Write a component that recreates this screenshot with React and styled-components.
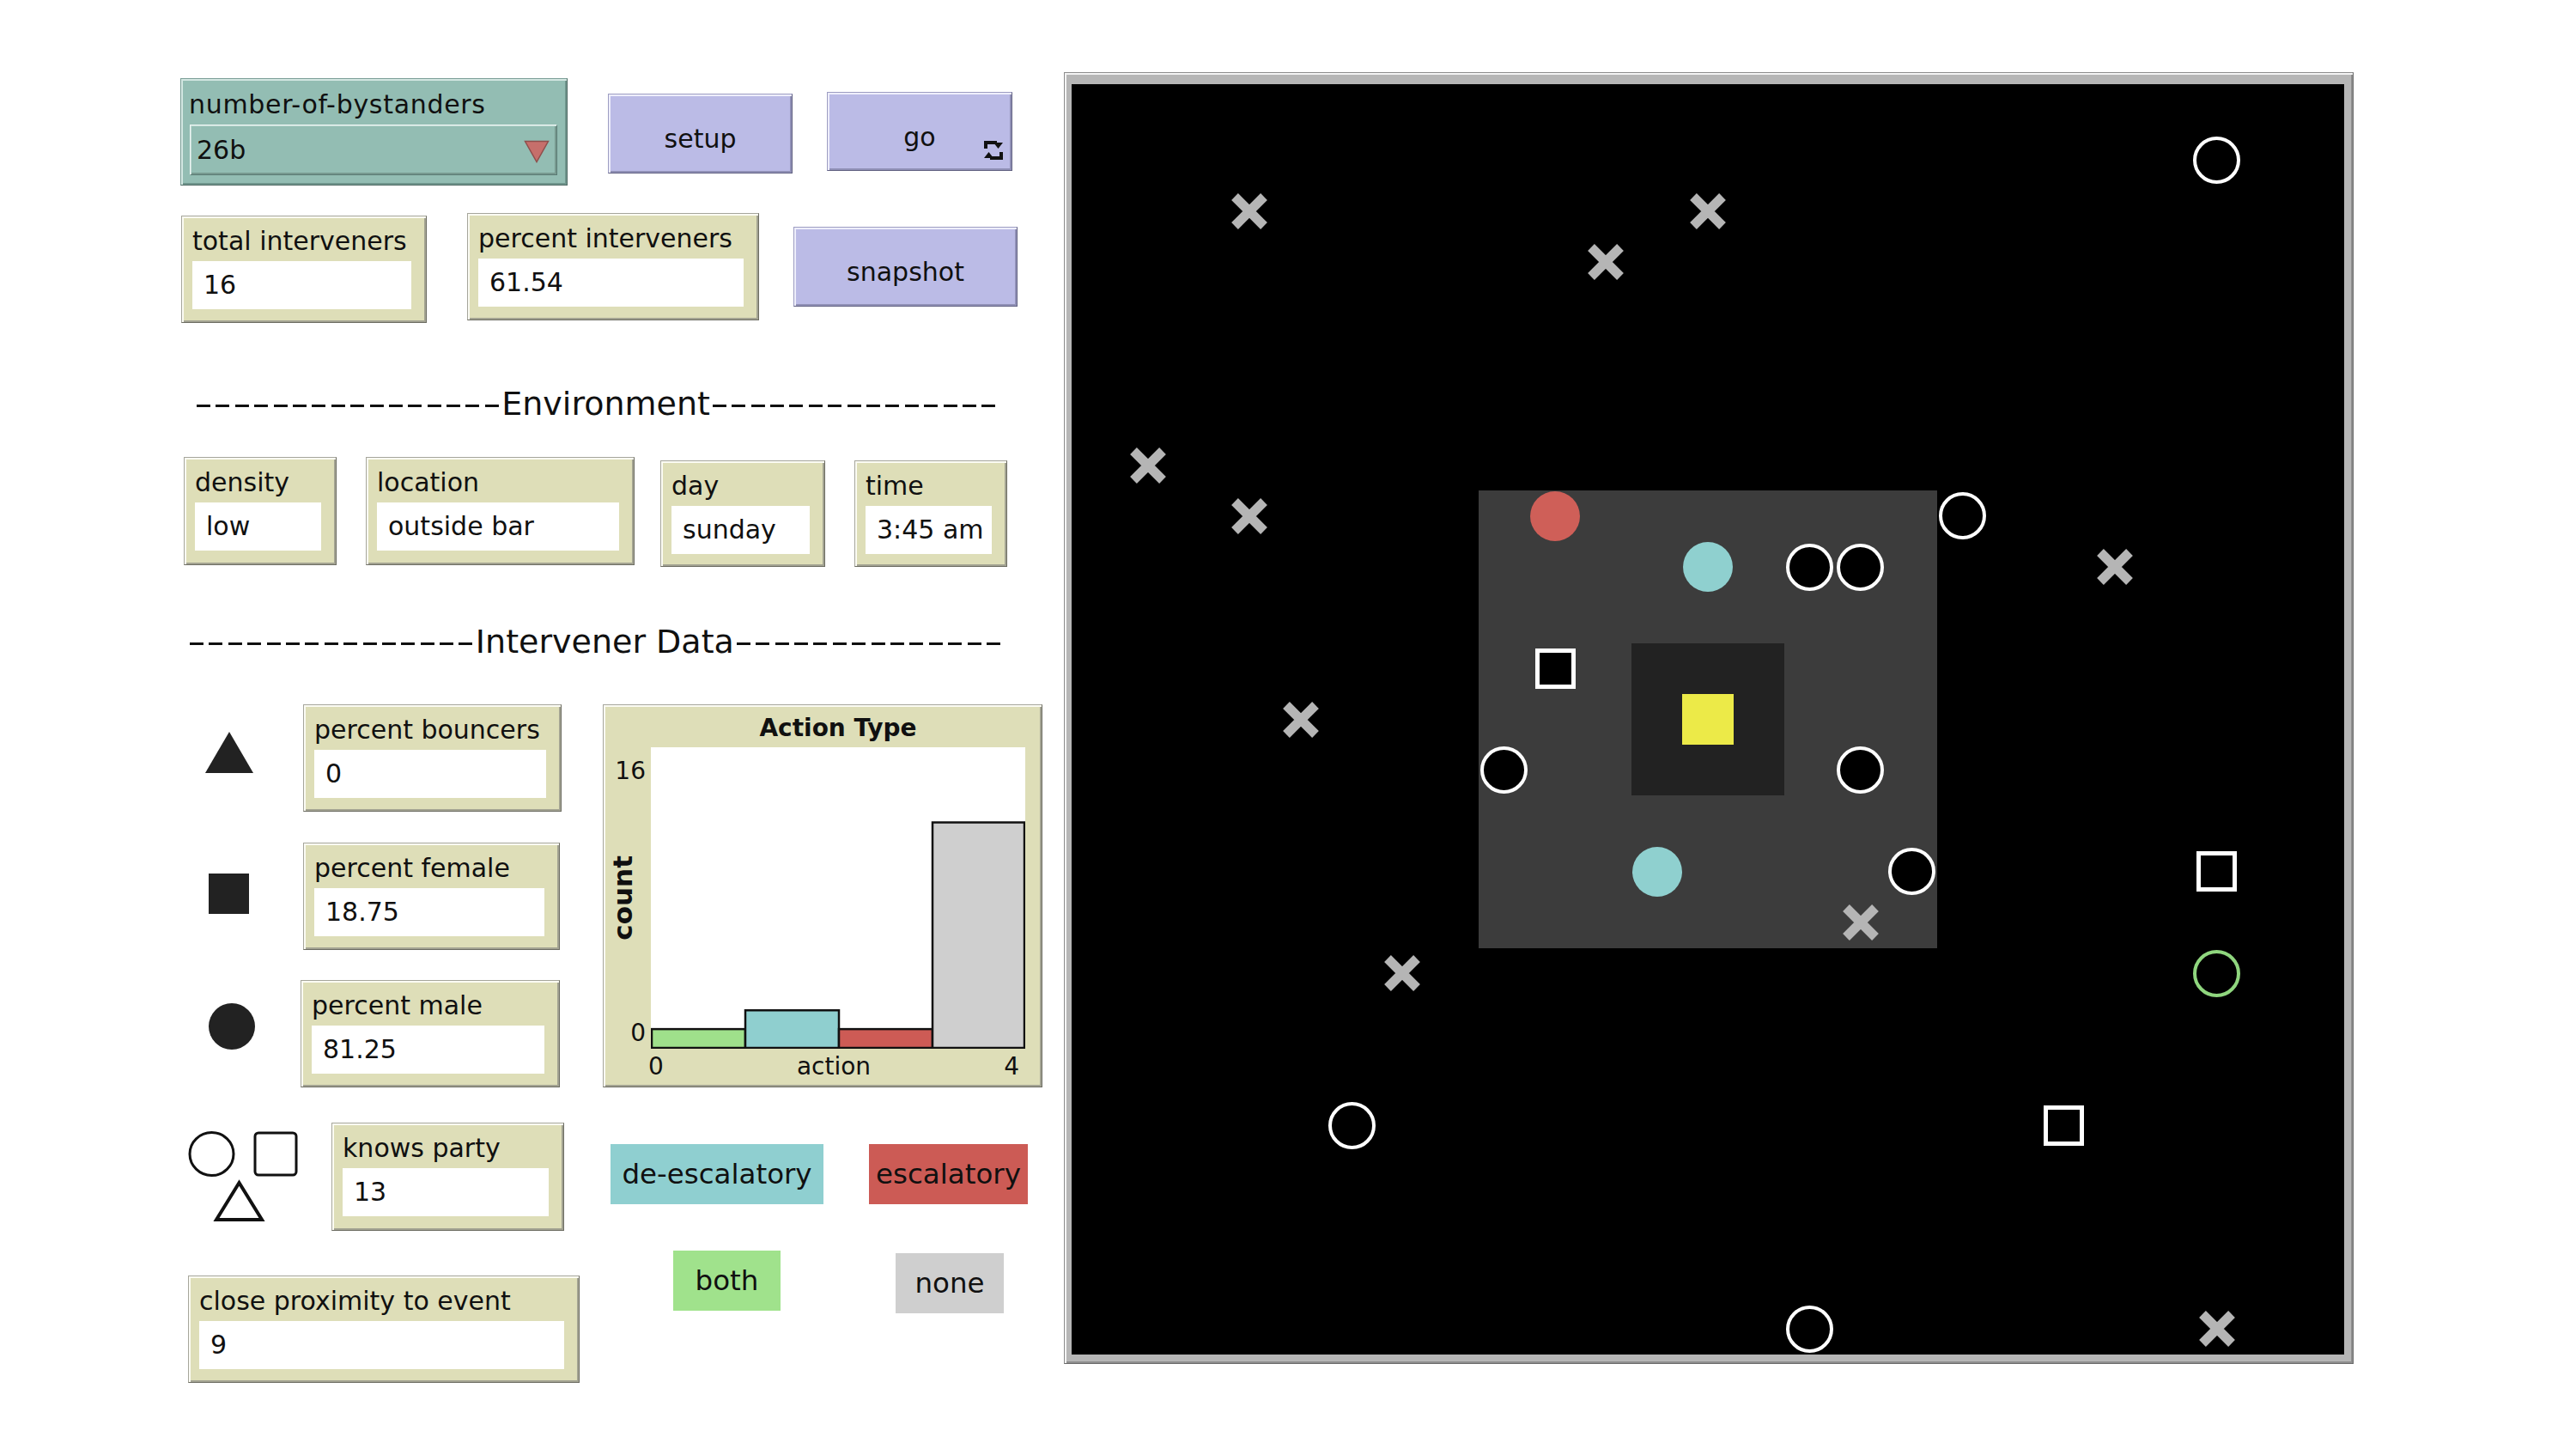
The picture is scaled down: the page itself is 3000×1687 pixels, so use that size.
import React from "react";
import styled, { createGlobalStyle, css } from "styled-components";

const FONT = `"DejaVu Sans", "Liberation Sans", Arial, sans-serif`;

const GlobalStyle = createGlobalStyle`
  html, body { margin: 0; padding: 0; background: #ffffff; }
  body { font-family: ${FONT}; color: #101010; }
`;

const Page = styled.div`
  display: flex;
  align-items: flex-start;
  width: 3000px;
  height: 1687px;
  overflow: hidden;
  background: #ffffff;
`;

const Interface = styled.div`
  flex: none;
  width: 1239px;
  display: flex;
  flex-direction: column;
`;

const Row = styled.div`
  display: flex;
  align-items: flex-start;
  margin-top: ${(p) => p.$mt}px;
`;

const placed = css`
  flex: none;
  box-sizing: border-box;
  position: relative;
  margin-left: ${(p) => p.$ml ?? 0}px;
  margin-top: ${(p) => p.$mt ?? 0}px;
  width: ${(p) => p.$w}px;
  height: ${(p) => p.$h}px;
`;

const tanBevel = css`
  background: #dedeb8;
  border: 1px solid;
  border-color: #a6a69c #6c6c62 #6c6c62 #a6a69c;
  box-shadow: inset 2px 2px 0 #fbfbf3, inset -2px -2px 0 #a3a392;
`;

/* ---------- monitors ---------- */
const MonitorBox = styled.div`
  ${placed}
  ${tanBevel}
  display: flex;
  flex-direction: column;
  padding: 0 17px 0 12px;
`;

const WidgetLabel = styled.div`
  height: 52px;
  box-sizing: border-box;
  padding-top: 14px;
  font-size: 30px;
  line-height: 30px;
  white-space: nowrap;
`;

const ValueField = styled.div`
  height: 56px;
  background: #ffffff;
  padding-left: 13px;
  font-size: 30px;
  line-height: 56px;
  white-space: nowrap;
`;

function Monitor({ label, value, ml, mt, w, h = 125 }) {
  return (
    <MonitorBox $ml={ml} $mt={mt} $w={w} $h={h}>
      <WidgetLabel>{label}</WidgetLabel>
      <ValueField>{value}</ValueField>
    </MonitorBox>
  );
}

/* ---------- chooser ---------- */
const ChooserBox = styled.div`
  ${placed}
  background: #93bdb3;
  border: 1px solid;
  border-color: #7a9e96 #4f6a64 #4f6a64 #7a9e96;
  box-shadow: inset 2px 2px 0 #d3e7e2, inset -2px -2px 0 #6f958c;
  padding: 0 11px 0 10px;
  display: flex;
  flex-direction: column;
`;

const ChooserLabel = styled(WidgetLabel)`
  padding-top: 15px;
  margin-left: -1px;
  letter-spacing: 0.7px;
`;

const Dropdown = styled.div`
  position: relative;
  box-sizing: border-box;
  height: 59px;
  margin-top: 1px;
  padding-left: 7px;
  background: #93bdb3;
  border: 1px solid;
  border-color: #eef6f4 #5a7a73 #5a7a73 #eef6f4;
  box-shadow: inset 1px 1px 0 #c6ded8, inset -2px -2px 0 #77998f;
  font-size: 30px;
  line-height: 57px;
`;

const DropArrow = styled.svg`
  position: absolute;
  right: 8px;
  top: 17px;
`;

/* ---------- buttons ---------- */
const ButtonBox = styled.div`
  ${placed}
  background: #bbbbe6;
  border: 1px solid;
  border-color: #9d9dc2 #626282 #626282 #9d9dc2;
  box-shadow: inset 2px 2px 0 #eeeefb, inset -2px -2px 0 #9090b6;
  display: flex;
  align-items: center;
  justify-content: center;
  padding-top: 12px;
  font-size: 30px;
  line-height: 35px;
  white-space: nowrap;
`;

const ForeverIcon = styled.svg`
  position: absolute;
  right: 9px;
  bottom: 10px;
`;

/* ---------- colour notes ---------- */
const Swatch = styled.div`
  ${placed}
  background: ${(p) => p.$bg};
  font-size: 32.5px;
  line-height: 70px;
  text-align: center;
  white-space: nowrap;
`;

/* ---------- titles ---------- */
const SectionTitle = styled.div`
  margin-left: ${(p) => p.$ml}px;
  margin-top: ${(p) => p.$mt}px;
  font-size: 38px;
  line-height: 44px;
  white-space: nowrap;
`;

const Dash = styled.span`
  display: inline-block;
  width: 22.4px;
  transform: scaleX(1.6);
  transform-origin: 0 50%;
`;

function Dashes({ count }) {
  return Array.from({ length: count }, (_, i) => <Dash key={i}>-</Dash>);
}

/* ---------- intervener section ---------- */
const Section = styled.div`
  display: flex;
  align-items: flex-start;
  margin-top: ${(p) => p.$mt}px;
`;

const MonitorColumn = styled.div`
  flex: none;
  width: 654px;
  display: flex;
  flex-direction: column;
`;

const IconRow = styled.div`
  display: flex;
  align-items: flex-start;
  margin-top: ${(p) => p.$mt}px;
`;

const ShapeIcon = styled.svg`
  flex: none;
  display: block;
  margin-left: ${(p) => p.$ml}px;
  margin-top: ${(p) => p.$mt}px;
`;

/* ---------- plot ---------- */
const PlotBox = styled.div`
  ${placed}
  ${tanBevel}
  display: grid;
  grid-template-columns: 55px 436px 1fr;
  grid-template-rows: 49px 351px 1fr;
`;

const PlotTitle = styled.div`
  grid-column: 2;
  grid-row: 1;
  padding-top: 13px;
  font-size: 28px;
  line-height: 28px;
  font-weight: 700;
  text-align: center;
  white-space: nowrap;
`;

const YAxis = styled.div`
  grid-column: 1;
  grid-row: 2;
  display: flex;
  flex-direction: column;
  align-items: flex-end;
  justify-content: space-between;
  padding: 14px 6px 4px 0;
  font-size: 28px;
  line-height: 28px;
`;

const AxisName = styled.div`
  align-self: center;
  writing-mode: vertical-rl;
  transform: rotate(180deg);
  font-size: 31px;
  font-weight: 700;
  line-height: 36px;
  margin-bottom: 10px;
  margin-right: 6px;
`;

const PlotArea = styled.div`
  grid-column: 2;
  grid-row: 2;
  background: #ffffff;
  svg { display: block; }
`;

const XAxis = styled.div`
  grid-column: 2;
  grid-row: 3;
  display: flex;
  justify-content: space-between;
  padding: 7px 7px 0 0;
  margin-left: -3px;
  font-size: 28px;
  line-height: 28px;
`;

/* ---------- world view ---------- */
const WorldFrame = styled.div`
  flex: none;
  box-sizing: border-box;
  margin-top: 84px;
  width: 1502px;
  height: 1504px;
  padding: 13px 10px 10px 8px;
  background: #b6b6b6;
  border: 1px solid;
  border-color: #8c8c8c #6a6a6a #6a6a6a #8c8c8c;
  box-shadow: inset 2px 2px 0 #f4f4f4, inset -2px -2px 0 #8e8e8e;
`;

const WorldCanvas = styled.div`
  position: relative;
  width: 1482px;
  height: 1479px;
  background: #000000;
  overflow: hidden;
`;

const PX = 1482 / 25;
const PY = 1479 / 25;

const PatchBlock = styled.div.attrs((p) => ({
  style: {
    left: `${p.$c * PX}px`,
    top: `${p.$r * PY}px`,
    width: `${p.$n * PX}px`,
    height: `${p.$n * PY}px`,
  },
}))`
  position: absolute;
  background: ${(p) => p.$color};
`;

const agentPos = (p) => ({
  style: {
    left: `${(p.$c + 0.5) * PX - p.$s / 2}px`,
    top: `${(p.$r + 0.5) * PY - p.$s / 2}px`,
  },
});

const Ring = styled.div.attrs(agentPos)`
  position: absolute;
  box-sizing: border-box;
  width: ${(p) => p.$s}px;
  height: ${(p) => p.$s}px;
  border-radius: 50%;
  border: 4px solid ${(p) => p.$color};
  background: #000000;
`;

const Dot = styled.div.attrs(agentPos)`
  position: absolute;
  width: ${(p) => p.$s}px;
  height: ${(p) => p.$s}px;
  border-radius: 50%;
  background: ${(p) => p.$color};
`;

const SquareAgent = styled.div.attrs(agentPos)`
  position: absolute;
  box-sizing: border-box;
  width: ${(p) => p.$s}px;
  height: ${(p) => p.$s}px;
  border: 5px solid #ffffff;
  background: #000000;
`;

const CrossAgent = styled.svg.attrs(agentPos)`
  position: absolute;
  display: block;
`;

const RINGS = [[22, 1], [17, 8], [14, 9], [15, 9], [8, 13], [15, 13], [16, 15], [5, 20], [14, 24]];
const DOTS = [[9, 8, "#cf5f58"], [12, 9, "#8fd0cf"], [11, 15, "#8fd0cf"]];
const SQUARES = [[9, 11], [22, 15], [19, 20]];
const CROSSES = [[3, 2], [12, 2], [10, 3], [1, 7], [3, 8], [20, 9], [4, 12], [15, 16], [6, 17], [22, 24]];

const BARS = [
  { n: 1, color: "#9fe08b" },
  { n: 2, color: "#8fcfcf" },
  { n: 1, color: "#cd5b55" },
  { n: 12, color: "#cfcfcf" },
];

function World() {
  return (
    <WorldFrame>
      <WorldCanvas>
        <PatchBlock $c={8} $r={8} $n={9} $color="#3c3c3c" />
        <PatchBlock $c={11} $r={11} $n={3} $color="#222222" />
        <PatchBlock $c={12} $r={12} $n={1} $color="#ecea48" />
        {CROSSES.map(([c, r]) => (
          <CrossAgent key={`x${c}-${r}`} $c={c} $r={r} $s={46} width="46" height="46" viewBox="0 0 46 46">
            <path d="M6 6 L40 40 M40 6 L6 40" stroke="#b5b5b5" strokeWidth="11" strokeLinecap="butt" />
          </CrossAgent>
        ))}
        {RINGS.map(([c, r]) => (
          <Ring key={`r${c}-${r}`} $c={c} $r={r} $s={55} $color="#ffffff" />
        ))}
        <Ring $c={22} $r={17} $s={55} $color="#8fd67e" />
        {DOTS.map(([c, r, color]) => (
          <Dot key={`d${c}-${r}`} $c={c} $r={r} $s={58} $color={color} />
        ))}
        {SQUARES.map(([c, r]) => (
          <SquareAgent key={`s${c}-${r}`} $c={c} $r={r} $s={47} />
        ))}
      </WorldCanvas>
    </WorldFrame>
  );
}

function ActionPlot() {
  const unit = 350 / 16;
  return (
    <PlotBox $ml={48} $mt={0} $w={512} $h={446}>
      <PlotTitle>Action Type</PlotTitle>
      <YAxis>
        <span>16</span>
        <AxisName>count</AxisName>
        <span>0</span>
      </YAxis>
      <PlotArea>
        <svg width="436" height="351" viewBox="0 0 436 351">
          {BARS.map((b, i) => (
            <rect
              key={i}
              x={i * 109 + 1}
              y={350 - b.n * unit}
              width={i === 3 ? 107 : 109}
              height={b.n * unit}
              fill={b.color}
              stroke="#111111"
              strokeWidth="2.5"
            />
          ))}
        </svg>
      </PlotArea>
      <XAxis>
        <span>0</span>
        <span>action</span>
        <span>4</span>
      </XAxis>
    </PlotBox>
  );
}

export default function App() {
  return (
    <>
      <GlobalStyle />
      <Page>
        <Interface>
          <Row $mt={90}>
            <ChooserBox $ml={210} $mt={1} $w={451} $h={125}>
              <ChooserLabel>number-of-bystanders</ChooserLabel>
              <Dropdown>
                26b
                <DropArrow width="30" height="27" viewBox="0 0 30 27">
                  <polygon points="1.5,1.5 28.5,1.5 15,25.5" fill="#c66f6b" stroke="#8e4f4c" strokeWidth="1.5" />
                </DropArrow>
              </Dropdown>
            </ChooserBox>
            <ButtonBox $ml={47} $mt={19} $w={215} $h={93}>setup</ButtonBox>
            <ButtonBox $ml={40} $mt={17} $w={216} $h={92}>
              go
              <ForeverIcon width="24" height="26" viewBox="0 0 24 26">
                <path d="M3 11 V4 H16" fill="none" stroke="#111" strokeWidth="4" />
                <polygon points="12,4 23,4 17.5,11" fill="#111" />
                <path d="M21 15 V22 H8" fill="none" stroke="#111" strokeWidth="4" />
                <polygon points="1,22 12,22 6.5,15" fill="#111" />
              </ForeverIcon>
            </ButtonBox>
          </Row>

          <Row $mt={31}>
            <Monitor label="total interveners" value="16" ml={211} mt={4} w={286} />
            <Monitor label="percent interveners" value="61.54" ml={47} mt={1} w={340} />
            <ButtonBox $ml={40} $mt={17} $w={261} $h={93}>snapshot</ButtonBox>
          </Row>

          <SectionTitle $ml={226} $mt={72}>
            <Dashes count={16} />Environment<Dashes count={15} />
          </SectionTitle>

          <Row $mt={40}>
            <Monitor label="density" value="low" ml={214} mt={0} w={178} h={126} />
            <Monitor label="location" value="outside bar" ml={34} mt={0} w={313} h={126} />
            <Monitor label="day" value="sunday" ml={30} mt={4} w={192} h={124} />
            <Monitor label="time" value="3:45 am" ml={34} mt={4} w={178} h={124} />
          </Row>

          <SectionTitle $ml={218} $mt={65}>
            <Dashes count={15} />Intervener Data<Dashes count={14} />
          </SectionTitle>

          <Section $mt={51}>
            <MonitorColumn>
              <IconRow $mt={0}>
                <ShapeIcon $ml={239} $mt={32} width="56" height="48" viewBox="0 0 56 48">
                  <polygon points="28,0 56,48 0,48" fill="#222222" />
                </ShapeIcon>
                <Monitor label="percent bouncers" value="0" ml={58} mt={0} w={301} />
              </IconRow>
              <IconRow $mt={36}>
                <ShapeIcon $ml={243} $mt={36} width="47" height="47" viewBox="0 0 47 47">
                  <rect x="0" y="0" width="47" height="47" fill="#222222" />
                </ShapeIcon>
                <Monitor label="percent female" value="18.75" ml={63} mt={0} w={299} />
              </IconRow>
              <IconRow $mt={35}>
                <ShapeIcon $ml={243} $mt={27} width="54" height="54" viewBox="0 0 54 54">
                  <circle cx="27" cy="27" r="27" fill="#222222" />
                </ShapeIcon>
                <Monitor label="percent male" value="81.25" ml={53} mt={0} w={302} />
              </IconRow>
            </MonitorColumn>
            <ActionPlot />
          </Section>

          <Row $mt={41}>
            <ShapeIcon $ml={219} $mt={10} width="128" height="106" viewBox="0 0 128 106">
              <ellipse cx="27.5" cy="26.5" rx="25.5" ry="25" fill="none" stroke="#111" strokeWidth="3" />
              <rect x="78" y="2" width="48" height="49" rx="4" fill="none" stroke="#111" strokeWidth="3" />
              <polygon points="59.5,60 86,103 33,103" fill="none" stroke="#111" strokeWidth="4" strokeLinejoin="miter" />
            </ShapeIcon>
            <Monitor label="knows party" value="13" ml={39} mt={0} w={271} h={126} />
            <Swatch $ml={54} $mt={25} $w={248} $h={70} $bg="#8fcfd0">de-escalatory</Swatch>
            <Swatch $ml={53} $mt={25} $w={185} $h={70} $bg="#cc5b55">escalatory</Swatch>
          </Row>

          <Row $mt={23}>
            <Monitor label="close proximity to event" value="9" ml={219} mt={29} w={456} />
            <Swatch $ml={109} $mt={0} $w={125} $h={70} $bg="#a0e28c">both</Swatch>
            <Swatch $ml={134} $mt={3} $w={126} $h={70} $bg="#cfcfcf">none</Swatch>
          </Row>
        </Interface>
        <World />
      </Page>
    </>
  );
}
